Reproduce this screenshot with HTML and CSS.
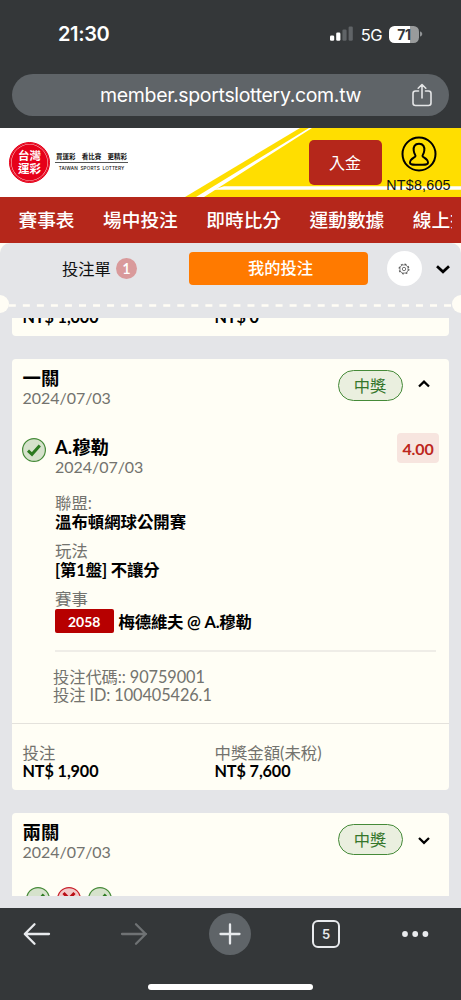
FILE: index.html
```
<!DOCTYPE html>
<html lang="zh-Hant">
<head>
<meta charset="utf-8">
<title>台灣運彩 - 我的投注</title>
<link rel="stylesheet" href="styles.css">
</head>
<body>
<svg class="defs" width="0" height="0" aria-hidden="true">
  <symbol id="won" viewBox="0 0 24 24"><circle cx="12" cy="12" r="11.4" fill="#d6e2cc" stroke="#458a38" stroke-width="1.2"/><path d="M6 12.6 10 16.3 17.8 7.6" fill="none" stroke="#2c7a20" stroke-width="3"/></symbol>
  <symbol id="lost" viewBox="0 0 24 24"><circle cx="12" cy="12" r="11.4" fill="#f1c9c9" stroke="#c8202a" stroke-width="1.2"/><path d="M6.5 6 17.5 17.5M17.5 6 6.5 17.5" stroke="#b90d16" stroke-width="3"/></symbol>
</svg>
<div class="phone">
  <header class="browser-top">
    <div class="status">
      <span class="clock">21:30</span>
      <span class="status-right">
        <svg class="signal" width="24" height="16" viewBox="0 0 24 16"><g fill="#fff"><rect x="0" y="9.5" width="4.2" height="5.3" rx="1.3"/><rect x="6.2" y="6.5" width="4.2" height="8.3" rx="1.3"/></g><g fill="#606467"><rect x="12.4" y="3.5" width="4.2" height="11.3" rx="1.3"/><rect x="18.6" y="0.5" width="4.2" height="14.3" rx="1.3"/></g></svg>
        <span class="net">5G</span>
        <span class="battery"><span class="level">71</span></span>
        <svg class="tip" width="3" height="6" viewBox="0 0 3 6"><path d="M0 .5C3 1 3 5 0 5.500Z" fill="#909395"/></svg>
      </span>
    </div>
    <div class="address"><span>member.sportslottery.com.tw</span>
      <svg class="share" width="20" height="24" viewBox="0 0 20 24" fill="none" stroke="#e4e5e6" stroke-width="1.6" stroke-linecap="round" stroke-linejoin="round"><path d="M6.500 8H3.500Q1 8 1 10.500V20Q1 22.500 3.500 22.500H16.500Q19 22.500 19 20V10.500Q19 8 16.500 8H13.500M10 15V1.500M6.200 5.200 10 1.500 13.800 5.200"/></svg>
    </div>
  </header>
  <section class="banner">
    <svg class="banner-art" width="461" height="69" viewBox="0 0 461 69"><path d="M300 0H461V69H185Z" fill="#ffde00"/><path d="M309 0H312L215 62 204 69H196Z" fill="#fff"/><path d="M224 58.300H461V61.700H213Z" fill="#fff"/></svg>
    <div class="brand">
      <div class="seal"><span>台灣</span><span>運彩</span></div>
      <div class="slogan"><div class="zh"><span>買運彩</span><span>看比賽</span><span>更精彩</span></div><div class="en">TAIWAN&nbsp; SPORTS&nbsp; LOTTERY</div></div>
    </div>
    <button class="deposit">入金</button>
    <div class="account">
      <svg width="36" height="36" viewBox="0 0 36 36" fill="none" stroke="#000" stroke-width="2"><circle cx="18" cy="18" r="16.500"/><path d="M18 7.800C13.500 7.800 12.300 11 12.700 14.500C13 17.500 14.500 18.800 14.500 20C14.500 21.800 9 22 9 27C9 28.600 11 28.800 18 28.800S27 28.600 27 27C27 22 21.500 21.800 21.500 20C21.500 18.800 23 17.500 23.300 14.500C23.700 11 22.500 7.800 18 7.800Z"/></svg>
      <span>NT$8,605</span>
    </div>
  </section>
  <nav class="menu"><span>賽事表</span><span>場中投注</span><span>即時比分</span><span>運動數據</span><span>線上投注</span></nav>
  <div class="page">
  <main class="slip">
    <div class="tabs">
      <div class="tab-slip">投注單<span class="count">1</span></div>
      <div class="tab-mine">我的投注</div>
      <div class="settings"><svg width="12" height="12" viewBox="0 0 12 12" fill="none" stroke="#555"><circle cx="6" cy="6" r="1.700" stroke-width=".8"/><circle cx="6" cy="6" r="4.100" stroke-width=".7"/><circle cx="6" cy="6" r="4.900" stroke-width="1.100" stroke-dasharray="1.900 1.948"/></svg></div>
      <svg class="fold" width="14" height="9" viewBox="0 0 14 9" fill="none" stroke="#000" stroke-width="2.700"><path d="M1 1.200 7 6.800 13 1.200"/></svg>
    </div>
    <div class="perforation"><i></i><svg width="461" height="3" viewBox="0 0 461 3"><path d="M8.800 1.500H455" stroke="#fffdf5" stroke-width="2.300" stroke-dasharray="7 7.040"/></svg><i></i></div>
    <div class="bets">
      <article class="card prev"><div class="totals"><div><b>NT$ 1,000</b></div><div><b>NT$ 0</b></div></div></article>
      <article class="card">
        <div class="card-head">
          <div><h2>一關</h2><p class="date">2024/07/03</p></div>
          <span class="result">中獎</span>
          <svg class="chev" width="12" height="8" viewBox="0 0 12 8" fill="none" stroke="#000" stroke-width="2.300"><path d="M1 6.500 6 1.700 11 6.500"/></svg>
        </div>
        <div class="leg">
          <svg class="mark" width="24" height="24"><use href="#won"/></svg>
          <div class="leg-body">
            <div class="pick"><div><h2>A.穆勒</h2><p class="date">2024/07/03</p></div><span class="odds">4.00</span></div>
            <dl>
              <dt>聯盟:</dt><dd>溫布頓網球公開賽</dd>
              <dt>玩法</dt><dd class="play">[第1盤] 不讓分</dd>
              <dt>賽事</dt><dd class="match"><span class="code">2058</span><span class="teams">梅德維夫 @ A.穆勒</span></dd>
            </dl>
            <div class="ids"><p>投注代碼:: 90759001</p><p>投注 ID: 100405426.1</p></div>
          </div>
        </div>
        <div class="totals"><div><span>投注</span><b>NT$ 1,900</b></div><div><span>中獎金額(未稅)</span><b>NT$ 7,600</b></div></div>
      </article>
      <article class="card">
        <div class="card-head">
          <div><h2>兩關</h2><p class="date">2024/07/03</p></div>
          <span class="result">中獎</span>
          <svg class="chev" width="12" height="8" viewBox="0 0 12 8" fill="none" stroke="#000" stroke-width="2.300"><path d="M1 1 6 5.800 11 1"/></svg>
        </div>
        <div class="marks"><svg width="24" height="24"><use href="#won"/></svg><svg width="24" height="24"><use href="#lost"/></svg><svg width="24" height="24"><use href="#won"/></svg></div>
      </article>
    </div>
  </main>
  </div>
  <footer class="toolbar">
    <div class="tools">
      <svg class="back" width="28" height="24" viewBox="0 0 28 24" fill="none" stroke="#e8eaed" stroke-width="2.300" stroke-linecap="round" stroke-linejoin="round"><path d="M26 12H2M11.500 2.300 1.800 12 11.500 21.700"/></svg>
      <svg width="28" height="24" viewBox="0 0 28 24" fill="none" stroke="#6f7274" stroke-width="2.300" stroke-linecap="round" stroke-linejoin="round"><path d="M2 12H26M16 2.300 25.700 12 16 21.700"/></svg>
      <svg width="42" height="42" viewBox="0 0 42 42" fill="none" stroke="#e8eaed" stroke-width="2.300" stroke-linecap="round"><circle cx="21" cy="21" r="21" fill="#5f6468" stroke="none"/><path d="M11.500 21H30.500M21 11.500V30.500"/></svg>
      <span class="tab-count">5</span>
      <svg width="28" height="8" viewBox="0 0 28 8" fill="#e8eaed"><circle cx="4" cy="4" r="2.900"/><circle cx="14.200" cy="4" r="2.900"/><circle cx="24.400" cy="4" r="2.900"/></svg>
    </div>
    <div class="home-bar"></div>
  </footer>
</div>
</body>
</html>
```
FILE: styles.css
```
* { box-sizing: border-box; }
body, h2, p, dl, dd { margin: 0; }
body {
  width: 461px;
  height: 1000px;
  overflow: hidden;
  font-family: Lato, "Noto Sans CJK TC", sans-serif;
  color: #111;
}
svg { display: block; flex: none; }
.defs { position: absolute; }
.phone { display: flex; flex-direction: column; height: 1000px; background: #343739; }

.browser-top { height: 128px; padding: 0 12px; color: #fff; font-family: Inter, sans-serif; }
.status { display: flex; justify-content: space-between; align-items: center; height: 74px; padding: 0 26px 6px 46px; }
.clock { font-size: 20px; font-weight: 600; line-height: 24px; letter-spacing: -.35px; }
.status-right { display: flex; align-items: center; }
.net { margin: 2px 7px 0; font-size: 16.5px; line-height: 20px; letter-spacing: -.5px; }
.battery { width: 30px; height: 17px; border-radius: 5.5px; overflow: hidden; background: linear-gradient(90deg, #fff 71%, #999b9c 71%); }
.level { display: block; text-align: center; color: #343739; font-size: 14px; font-weight: 700; line-height: 17px; letter-spacing: -.4px; }
.tip { margin-left: 1px; }
.address { display: flex; align-items: center; justify-content: space-between; height: 42px; padding: 0 17px 0 88px; border-radius: 21px; background: #5f6468; font-size: 19.500px; white-space: nowrap; }
.address span { letter-spacing: -.33px; }

.banner { position: relative; display: flex; height: 69px; background: #fff; }
.banner-art { position: absolute; inset: 0; }
.brand, .deposit, .account { position: relative; }
.brand { display: flex; width: 299px; padding: 14px 0 0 9px; gap: 4px; }
.seal { display: flex; flex-direction: column; align-items: center; gap: 1px; width: 41px; height: 41px; padding-top: 7px; border: 1px solid #e60019; border-radius: 50%; background: #e60019; box-shadow: inset 0 0 0 1px #e60019, inset 0 0 0 1.6px #f9b8bd; color: #fff; font-size: 11.500px; font-weight: 700; line-height: 12px; }
.slogan { width: 73px; margin-left: 1px; padding-top: 10px; }
.zh { display: flex; justify-content: space-between; height: 11px; padding: 0 1px; border-bottom: 1px solid #555; font-size: 6.500px; font-weight: 700; line-height: 9px; }
.en { padding-top: 2px; font: 500 4.700px/6px Inter, sans-serif; letter-spacing: .1px; text-align: center; white-space: nowrap; }
.deposit { width: 73px; height: 45px; margin: 12px 0 0 9.500px; padding: 0; border: 0; border-radius: 5px; background: #b5271b; color: #fff; font: 400 16px/45px "Noto Sans CJK TC", sans-serif; }
.account { display: flex; flex-direction: column; align-items: center; width: 74px; padding-top: 8px; font: 14.300px/16px "Liberation Sans", sans-serif; }
.account span { margin-top: 5px; letter-spacing: .2px; }

.menu { display: flex; gap: 28.500px; height: 46px; padding-left: 18.500px; border-right: 9px solid #b5271b; background: #b5271b; color: #fff; font: 500 18.700px/44px "Noto Sans CJK TC", sans-serif; white-space: nowrap; overflow: hidden; }

.page { height: 665px; background: #fffdf5; }
.slip { height: 665px; padding-top: 5px; background: #e4e5e8; border-radius: 10px 10px 0 0; }
.tabs { display: flex; align-items: center; height: 41px; padding-left: 62px; }
.tab-slip { display: flex; align-items: center; gap: 5px; width: 126.500px; height: 21px; font-size: 16.300px; line-height: 20px; }
.count { width: 21px; height: 21px; border-radius: 50%; background: #d99a9b; color: #fff; font-size: 14.500px; font-weight: 600; line-height: 21px; text-align: center; }
.tab-mine { width: 179px; height: 33px; padding-left: 5px; border-radius: 4px; background: #ff7a00; color: #fff; font-size: 16.300px; font-weight: 500; line-height: 32px; text-align: center; }
.settings { display: flex; align-items: center; justify-content: center; width: 35px; height: 35px; margin-left: 19px; border-radius: 50%; background: #fff; }
.fold { margin-left: 14px; margin-top: 2px; }
.perforation { position: relative; display: flex; align-items: center; height: 29px; padding-top: 3px; }
.perforation i { position: absolute; left: -9px; top: 6px; width: 18px; height: 18px; border-radius: 50%; background: #fffdf5; }
.perforation i:last-child { left: 452px; }

.bets { display: flex; flex-direction: column; gap: 23px; height: 578px; padding: 0 12px; overflow: hidden; }
.card { flex: none; border-radius: 4px; background: #fffef5; }
.card h2 { height: 20px; color: #000; font-size: 18.400px; font-weight: 700; line-height: 19px; white-space: nowrap; }
.date { height: 18px; color: #73736e; font-size: 16px; line-height: 18px; letter-spacing: -.04px; }
.card-head { display: flex; align-items: flex-start; height: 74px; padding: 10px 19.500px 0 10.500px; }
.card-head > div { flex: 1; }
.result { width: 65px; height: 31px; margin-top: 1px; border: 1.300px solid #458a38; border-radius: 16px; background: #eaefdf; color: #35762b; font-size: 16.300px; line-height: 29px; text-align: center; }
.chev { margin: 11px 0 0 15px; }
.card:last-child .chev { margin-top: 14px; }
.leg { display: flex; height: 290px; padding-left: 10px; }
.mark { margin-top: 5px; margin-right: 9px; }
.leg-body { width: 384px; }
.pick { display: flex; justify-content: space-between; height: 61px; padding-top: 5px; }
.odds { width: 42px; height: 30px; margin-top: -5px; border-radius: 4px; background: #f7e5df; color: #bd271c; font-size: 16px; font-weight: 700; line-height: 31px; letter-spacing: -.1px; text-align: center; }
dl { height: 158px; margin-right: 3px; border-bottom: 2px solid #efede7; font-size: 16.400px; }
dt { height: 18px; color: #73736e; line-height: 17px; }
dd { height: 30px; color: #000; font-weight: 700; line-height: 20px; }
.play { letter-spacing: -.12px; }
.match { display: flex; gap: 5px; padding-top: 1px; }
.code { width: 58.500px; height: 24px; border-radius: 2px; background: #b70000; color: #fff; font-size: 14px; font-weight: 700; line-height: 25px; text-align: center; }
.teams { line-height: 25px; letter-spacing: -.2px; }
.ids { margin: 16px 0 0 -2px; color: #73736e; font-size: 16.300px; line-height: 18px; letter-spacing: -.08px; }
.totals { display: flex; height: 67px; padding: 20px 10.500px 0; border-top: 1px solid #e4e2dc; font-size: 16.400px; line-height: 18px; }
.totals div { width: 192px; white-space: nowrap; }
.totals span, .totals b { display: block; height: 18px; }
.totals span { color: #73736e; }
.totals b { color: #000; font-size: 16.200px; font-weight: 700; letter-spacing: -.1px; }
.prev { height: 18px; border-radius: 0 0 4px 4px; }
.prev .totals { height: 18px; padding-top: 0; border: 0; overflow: hidden; }
.prev b { margin-top: -10px; }
.marks { display: flex; gap: 7px; padding-left: 14px; }

.toolbar { height: 92px; background: #343739; }
.tools { display: flex; align-items: center; justify-content: space-between; height: 52px; padding: 0 32px 0 23px; }
.back { margin-right: 8px; }
.tab-count { width: 28px; height: 28px; border: 2.300px solid #e8eaed; border-radius: 6px; color: #e8eaed; font: 600 13px/24px Inter, sans-serif; text-align: center; }
.home-bar { width: 165px; height: 6px; margin: 24px auto 0; border-radius: 3px; background: #fff; }
```
